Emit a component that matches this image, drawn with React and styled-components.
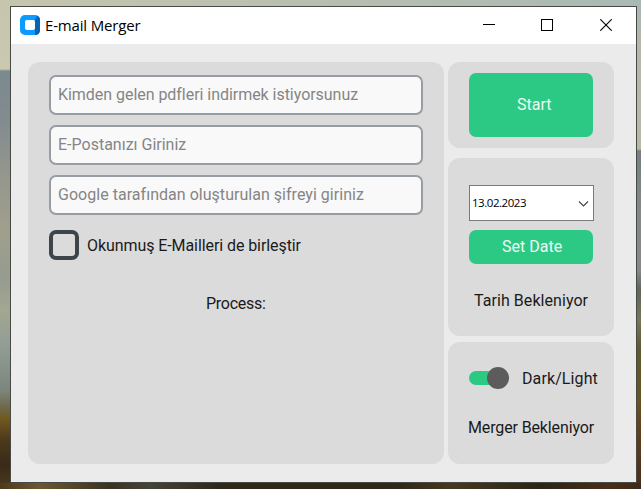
import React from "react";
import styled, { createGlobalStyle } from "styled-components";

const Global = createGlobalStyle`
  * { box-sizing: border-box; }
  body { margin: 0; overflow: hidden; }
`;
const Desktop = styled.div`
  width: 641px; height: 489px; padding: 6px 4px 6px 10px;
  font-family: Roboto, sans-serif; font-size: 16px; color: #1a1a1a;
  background:
    linear-gradient(90deg, #4d3a1c, #6b5730 40px, #3a3222 110px, #45443a 150px, #2e281c 220px, #302819 400px, #463821 450px, #2b2518 540px, #4a2d18 610px, #3c2a1a) 0 483px / 641px 6px no-repeat,
    linear-gradient(180deg, #a9b9b4 0, #b3b8ac 40px, #b9b8a6 149px, #75807f 151px, #838987 210px, #85898a 270px, #5d675b 290px, #77755a 320px, #5f582f 350px, #665423 400px, #66401f 425px, #4a2c18 489px) 637px 0 / 4px 489px no-repeat,
    linear-gradient(180deg, #c6c5ae 0, #cbc8b0 69px, #7b8a8f 71px, #828b90 120px, #95978d 175px, #a09f8d 230px, #969c90 280px, #a3a792 310px, #929d95 345px, #7c867e 390px, #6d6847 408px, #73591f 418px, #4d391b 440px, #392a18 465px, #4d3a1c 489px) 0 0 / 10px 489px no-repeat,
    linear-gradient(90deg, #c6c5ae, #b5bdb0 60%, #a9b9b4);
`;
const Window = styled.div`
  width: 627px; height: 477px; border: 1px solid #484a46; background: #ebebeb;
`;
const TitleBar = styled.header`
  height: 37px; background: #fff; display: flex; align-items: flex-start; padding: 8px 24px 0 9px;
  font-family: "Open Sans", sans-serif; font-size: 15px; color: #000;
`;
const Title = styled.span`flex: 1; margin: 0 0 0 5px; line-height: 20px; letter-spacing: -0.16px;`;
const Controls = styled.div`
  display: flex; gap: 47px; margin-top: 4px;
  svg { display: block; }
  svg:first-child { margin-right: -1px; }
`;
const Body = styled.main`display: flex; gap: 4px; padding: 18px 0 0 17px;`;
const Panel = styled.section`
  background: #dbdbdb; border-radius: 12px; width: ${p => p.$w}px; height: ${p => p.$h}px;
  padding: ${p => p.$pad};
`;
const Side = styled.div`display: flex; flex-direction: column;`;
const Gap = styled.div`height: ${p => p.$h}px;`;
const Field = styled.div`
  height: 40px; border: 2px solid #979da2; border-radius: 7px; background: #f9f9fa;
  color: #858585; padding: 0 7px; line-height: 36px; margin-bottom: 10px; white-space: nowrap;
`;
const Text = styled.span`letter-spacing: ${p => p.$ls || 0}px; white-space: nowrap;`;
const CheckRow = styled.div`display: flex; align-items: center; gap: 8px; height: 30px; margin-top: 15px;`;
const CheckBox = styled.div`width: 30px; height: 30px; border: 4px solid #3e454a; border-radius: 7px;`;
const Label = styled.div`
  line-height: 20px; white-space: nowrap; margin: ${p => p.$m};
`;
const Button = styled.div`
  background: #2cc985; color: #eefaf4; border-radius: 7px; width: 124px; height: ${p => p.$h}px;
  line-height: ${p => p.$h - 1}px; padding-left: ${p => p.$pl}px; white-space: nowrap;
`;
const DateEntry = styled.div`
  width: 125px; height: 36px; border: 1px solid #7a7a7a; background: #fff; color: #000;
  display: flex; align-items: center; justify-content: space-between; padding: 0 4px 1px 2px; margin-bottom: 9px;
  font-family: "Open Sans", sans-serif; font-size: 11.5px;
  svg { margin-top: 2px; }
`;
const SwitchRow = styled.div`display: flex; align-items: center; height: 22px; gap: 13px;`;
const Track = styled.div`
  width: 40px; height: 14px; border-radius: 7px; display: flex; align-items: center; justify-content: flex-end;
  background: linear-gradient(90deg, #2cc985 30px, transparent 30px);
`;
const Knob = styled.div`width: 22px; height: 22px; border-radius: 50%; background: #5c5c5c; flex: none;`;

export default function App() {
  return (
    <Desktop>
      <Global />
      <Window>
        <TitleBar>
          <svg width="20" height="20" viewBox="0 0 20 20">
            <rect width="20" height="20" rx="5" fill="#0e9bff" />
            <path d="M15 5L17 0.8Q20 2 20 5V15Q20 20 15 20L15 15Z" fill="#0a62b4" />
            <rect x="5" y="5" width="10" height="10" rx="2" fill="#fff" />
          </svg>
          <Title>E-mail Merger</Title>
          <Controls>
            <svg width="12" height="12"><path d="M0 5.5H12" stroke="#000" /></svg>
            <svg width="12" height="12"><rect x=".5" y=".5" width="11" height="11" fill="none" stroke="#000" /></svg>
            <svg width="12" height="12"><path d="M.3 .3L11.7 11.7M11.7 .3L.3 11.7" stroke="#000" strokeWidth="1.1" /></svg>
          </Controls>
        </TitleBar>
        <Body>
          <Panel $w={416} $h={402} $pad="13px 21px">
            <Field><Text $ls={-0.04}>Kimden gelen pdfleri indirmek istiyorsunuz</Text></Field>
            <Field><Text>E-Postanızı Giriniz</Text></Field>
            <Field><Text $ls={0.03}>Google tarafından oluşturulan şifreyi giriniz</Text></Field>
            <CheckRow>
              <CheckBox />
              <Text $ls={-0.08}>Okunmuş E-Mailleri de birleştir</Text>
            </CheckRow>
            <Label $m="34px 0 0 157px"><Text $ls={-0.25}>Process:</Text></Label>
          </Panel>
          <Side>
            <Panel $w={166} $h={86} $pad="11px 21px">
              <Button $h={64} $pl={48}><Text>Start</Text></Button>
            </Panel>
            <Gap $h={10} />
            <Panel $w={166} $h={178} $pad="27px 20px 0 21px">
              <DateEntry>
                <Text $ls={-0.46}>13.02.2023</Text>
                <svg width="11" height="8"><path d="M1 1.5L5.5 6L10 1.5" fill="none" stroke="#444" strokeWidth="1.1" /></svg>
              </DateEntry>
              <Button $h={34} $pl={33}><Text>Set Date</Text></Button>
              <Label $m="27px 0 0 5px"><Text $ls={0.06}>Tarih Bekleniyor</Text></Label>
            </Panel>
            <Gap $h={6} />
            <Panel $w={166} $h={122} $pad="25px 0 0 21px">
              <SwitchRow><Track><Knob /></Track><Text $ls={0.1}>Dark/Light</Text></SwitchRow>
              <Label $m="29px 0 0 -1px"><Text $ls={-0.13}>Merger Bekleniyor</Text></Label>
            </Panel>
          </Side>
        </Body>
      </Window>
    </Desktop>
  );
}
